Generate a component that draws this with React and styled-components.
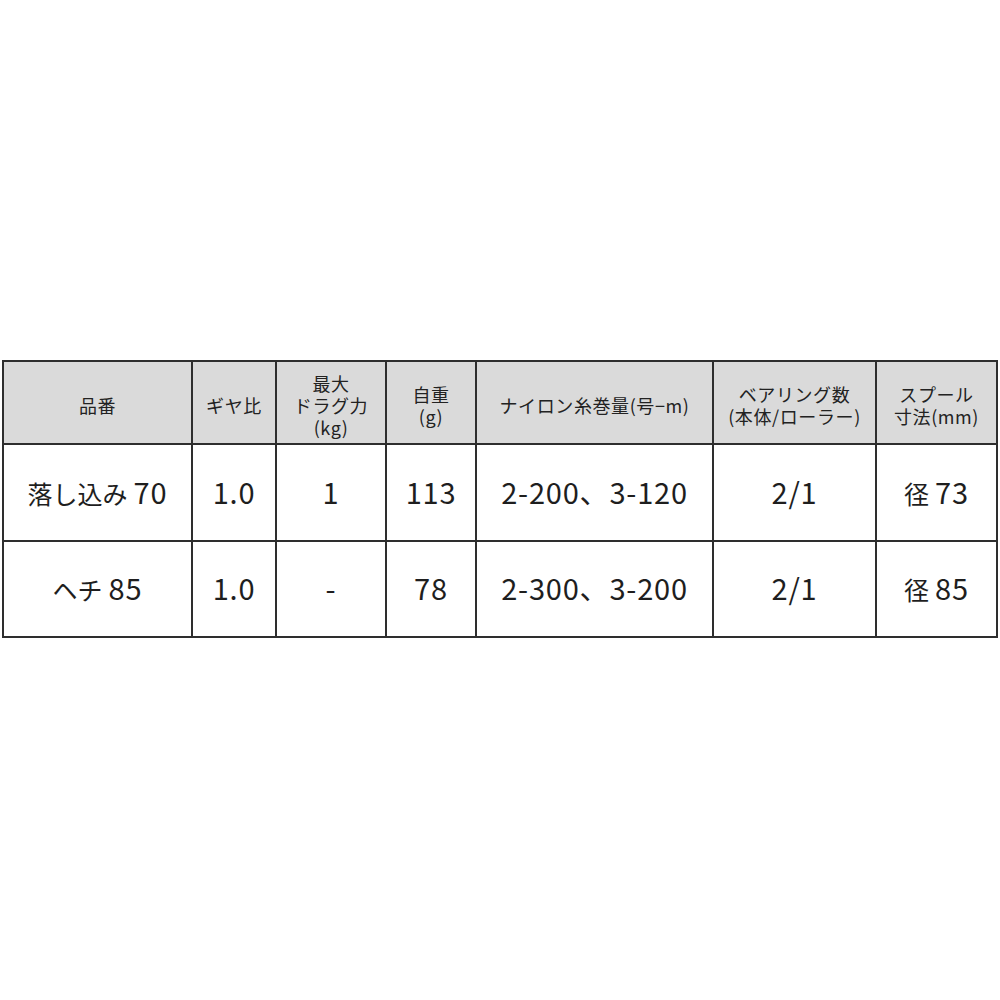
import styled, { createGlobalStyle } from "styled-components";

const GlobalStyle = createGlobalStyle`
  html, body {
    margin: 0;
    padding: 0;
    background: #ffffff;
  }
  body {
    font-family: "Noto Sans CJK JP", "Noto Sans", sans-serif;
    color: #1e1e1e;
  }
`;

const columns = [189, 84, 110, 90, 237, 163, 121];

const headers = [
  ["品番"],
  ["ギヤ比"],
  ["最大", "ドラグ力", "(kg)"],
  ["自重", "(g)"],
  ["ナイロン糸巻量(号−m)"],
  ["ベアリング数", "(本体/ローラー)"],
  ["スプール", "寸法(mm)"],
];

// each value: [kana part, number part]
const rows = [
  [["落し込み", "70"], ["", "1.0"], ["", "1"], ["", "113"], ["", "2-200、3-120"], ["", "2/1"], ["径", "73"]],
  [["ヘチ", "85"], ["", "1.0"], ["", "-"], ["", "78"], ["", "2-300、3-200"], ["", "2/1"], ["径", "85"]],
];

const rowHeights = [91, 90];

const Page = styled.main`
  padding: 360px 0 0 2px;
  width: 1000px;
  height: 1000px;
  box-sizing: border-box;
`;

const SpecTable = styled.table`
  width: 996px;
  border-collapse: collapse;
  table-layout: fixed;
`;

const HeadCell = styled.th`
  height: 77px;
  padding: 4px 0 0;
  border: 2px solid #2e2e2e;
  background: #dadada;
  font-weight: 400;
  font-size: 18px;
  line-height: 22px;
  letter-spacing: 0.6px;
  text-align: center;
  vertical-align: middle;
  color: #222;
`;

const BodyCell = styled.td`
  height: ${(p) => p.$height}px;
  padding: 0 0 4px;
  border: 2px solid #2e2e2e;
  font-size: 29px;
  letter-spacing: 0.8px;
  text-align: center;
  vertical-align: middle;
  white-space: nowrap;
`;

const Kana = styled.span`
  font-size: 25px;
  letter-spacing: 0;
  margin-right: 6px;
`;

const Line = styled.span`
  display: block;
`;

export default function App() {
  return (
    <>
      <GlobalStyle />
      <Page>
        <SpecTable>
          <colgroup>
            {columns.map((w, i) => (
              <col key={i} style={{ width: w }} />
            ))}
          </colgroup>
          <thead>
            <tr>
              {headers.map((lines, i) => (
                <HeadCell key={i}>
                  {lines.map((l) => (
                    <Line key={l}>{l}</Line>
                  ))}
                </HeadCell>
              ))}
            </tr>
          </thead>
          <tbody>
            {rows.map((r, ri) => (
              <tr key={ri}>
                {r.map(([kana, num], ci) => (
                  <BodyCell key={ci} $height={rowHeights[ri]}>
                    {kana && <Kana>{kana}</Kana>}
                    {num}
                  </BodyCell>
                ))}
              </tr>
            ))}
          </tbody>
        </SpecTable>
      </Page>
    </>
  );
}
